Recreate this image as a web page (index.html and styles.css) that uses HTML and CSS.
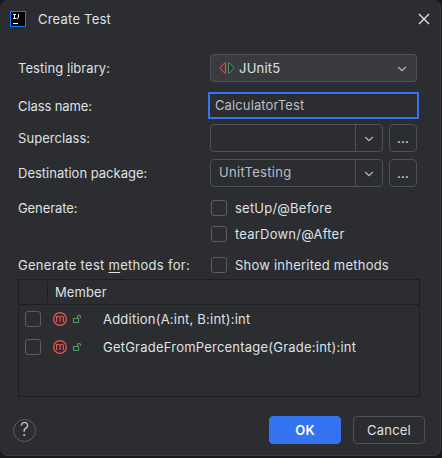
FILE: index.html
```
<!DOCTYPE html>
<html lang="en">
<head>
<meta charset="utf-8">
<title>Create Test</title>
<link rel="stylesheet" href="styles.css">
</head>
<body>
<svg width="0" height="0" class="defs">
  <symbol id="chevron" viewBox="0 0 10 6"><path d="M1.2 1 5 4.6 8.8 1" fill="none" stroke="#b4b8bf" stroke-width="1.2"/></symbol>
  <symbol id="method" viewBox="0 0 14 14"><circle cx="7" cy="7" r="6.4" fill="#402929" stroke="#db5c5c" stroke-width="1.2"/><path d="M3.5 10V4M3.5 6Q3.6 4.5 5.3 4.5T7 6V10M7 6Q7.1 4.5 8.8 4.5T10.5 6V10" fill="none" stroke="#db5c5c" stroke-width="1.1"/></symbol>
  <symbol id="unlocked" viewBox="0 0 8 8"><path d="M.5 3.5H5.5V7.5H.5ZM4.5 3.5V1.7Q4.5.5 6 .5T7.5 1.7V3" fill="none" stroke="#57965c" stroke-width="1.15"/></symbol>
</svg>
<main class="dialog">
  <header class="titlebar">
    <svg class="logo" width="16" height="16" viewBox="0 0 16 16"><rect x=".5" y=".5" width="15" height="15" fill="#000" stroke="#087cfa"/><path d="M3 3.5H6M4.5 3.5V7.5M3 7.5H6M8.5 3V6.7Q8.5 7.5 6.5 7.5" fill="none" stroke="#fff"/><path d="M3 12.5H8" stroke="#fff"/></svg>
    <h1>Create Test</h1>
    <svg class="close" width="12" height="12" viewBox="0 0 12 12"><path d="M1 1 11 11M11 1 1 11" stroke="#f0f1f2" stroke-width="1.1"/></svg>
  </header>
  <form class="form">
    <div class="row library">
      <label>Testing <u>l</u>ibrary:</label>
      <div class="select">
        <svg width="16" height="12" viewBox="0 0 16 12"><path d="M6.5 .8V11.2H5.7L1.4 6.6V5.4L5.7 .8Z" fill="#5a3033" stroke="#db5c5c"/><path d="M9.5 .8V11.2H10.3L14.6 6.6V5.4L10.3 .8Z" fill="#253627" stroke="#57965c"/></svg>
        <span>JUnit5</span>
        <svg class="arrow" width="10" height="6"><use href="#chevron"/></svg>
      </div>
    </div>
    <div class="row name">
      <label>Class name:</label>
      <div class="input focused">CalculatorTest</div>
    </div>
    <div class="row super">
      <label>Superclass:</label>
      <div class="combo"><span></span><i><svg width="10" height="6"><use href="#chevron"/></svg></i></div>
      <div class="browse">...</div>
    </div>
    <div class="row package">
      <label>Destination package:</label>
      <div class="combo"><span>UnitTesting</span><i><svg width="10" height="6"><use href="#chevron"/></svg></i></div>
      <div class="browse">...</div>
    </div>
    <div class="row check before"><label>Generate:</label><b class="box"></b><span>setUp/@Before</span></div>
    <div class="row check after"><label></label><b class="box"></b><span>tearDown/@After</span></div>
    <div class="row check inherited"><label>Generate test <u>m</u>ethods for:</label><b class="box"></b><span>Show inherited methods</span></div>
  </form>
  <section class="table">
    <div class="thead"><i></i><span>Member</span></div>
    <div class="member"><b class="box"></b><svg class="m" width="14" height="14"><use href="#method"/></svg><svg class="lock" width="8" height="8"><use href="#unlocked"/></svg><span>Addition(A:int, B:int):int</span></div>
    <div class="member"><b class="box"></b><svg class="m" width="14" height="14"><use href="#method"/></svg><svg class="lock" width="8" height="8"><use href="#unlocked"/></svg><span>GetGradeFromPercentage(Grade:int):int</span></div>
  </section>
  <footer class="footer">
    <div class="help">?</div>
    <div class="button primary">OK</div>
    <div class="button">Cancel</div>
  </footer>
</main>
</body>
</html>
```
FILE: styles.css
```
* { box-sizing: border-box; }
body {
  margin: 0;
  height: 458px;
  overflow: hidden;
  background: #19191b;
  color: #dfe1e5;
  font: 13px/16px Inter, "Liberation Sans", sans-serif;
  letter-spacing: 0.22px;
}
svg { display: block; flex: none; }
.defs { position: absolute; }
.dialog {
  width: 441px;
  height: 456px;
  background: #2b2d30;
  border: solid #3c3d40;
  border-width: 0 1px 1px 0;
  border-radius: 8px;
  overflow: hidden;
}
.titlebar {
  display: flex;
  align-items: center;
  height: 38px;
  padding: 0 10px;
}
h1 { margin: 0 auto 0 12px; font-size: 13px; font-weight: 400; }
.form { padding-left: 18px; }
.row { display: flex; align-items: center; height: 28px; }
.row label { width: 192px; flex: none; white-space: nowrap; letter-spacing: 0; }
.row.inherited label { letter-spacing: 0.28px; }
u { text-decoration: underline; text-underline-offset: 2px; text-decoration-skip-ink: none; }
.library { margin-top: 16px; }
.library label, .super label { padding-bottom: 1px; letter-spacing: 0.05px; }
.name { margin-top: 10px; height: 27px; }
.name label { letter-spacing: -0.1px; }
.super { margin-top: 5px; }
.package { margin-top: 7px; }
.package label { padding-bottom: 1px; }
.select {
  display: flex;
  align-items: center;
  width: 207px;
  height: 28px;
  padding: 0 9px 0 8px;
  border: 1px solid #4e5157;
  border-radius: 4px;
  background: #393b40;
}
.select span { margin-left: 4px; }
.arrow { margin: 2px 0 0 auto; }
.input {
  width: 211px;
  height: 27px;
  margin-left: -2px;
  padding: 3px 5px;
  border: 2px solid #3574f0;
  border-radius: 1px;
  color: #bcbec4;
  letter-spacing: 0.12px;
}
.combo {
  display: flex;
  width: 173px;
  height: 28px;
  border: 1px solid #4e5157;
  border-radius: 4px;
  color: #bcbec4;
}
.combo span { flex: 1; padding: 4px 8px; letter-spacing: 0.3px; }
.combo i {
  display: grid;
  place-items: center;
  width: 27px;
  padding-top: 2px;
  border-left: 1px solid #4e5157;
}
.browse {
  width: 28px;
  height: 28px;
  margin-left: 6px;
  padding-top: 5px;
  border: 1px solid #4e5157;
  border-radius: 4px;
  text-align: center;
}
.check { height: 16px; }
.box {
  flex: none;
  width: 16px;
  height: 16px;
  border: 1px solid #5a5d63;
  border-radius: 3px;
}
.check .box { margin: 0 8px 0 1px; }
.before { margin-top: 13px; }
.before label { letter-spacing: -0.1px; }
.after { margin-top: 10px; }
.inherited { margin-top: 15px; }
.table {
  width: 402px;
  height: 118px;
  margin: 6px 0 0 18px;
  border: 1px solid #1e1f22;
}
.thead {
  display: flex;
  align-items: center;
  height: 25px;
  border-bottom: 1px solid #1e1f22;
}
.thead i { width: 29px; height: 22px; border-right: 1px solid #1e1f22; }
.thead span { margin-left: 7px; letter-spacing: 0.1px; }
.member {
  display: flex;
  align-items: center;
  height: 28px;
  padding-left: 6px;
}
.m { margin-left: 12px; }
.lock { margin-left: 6px; }
.member span { margin-left: 22px; white-space: nowrap; }
.footer {
  display: flex;
  align-items: center;
  height: 28px;
  margin-top: 19px;
  padding: 0 15px 0 13px;
}
.help {
  width: 23px;
  height: 23px;
  margin: 1px auto 0 0;
  border: 1px solid #5a5d63;
  border-radius: 50%;
  font-size: 18px;
  font-weight: 300;
  line-height: 20px;
  text-align: center;
  color: #ced0d6;
}
.button {
  width: 72px;
  height: 28px;
  border: 1px solid #4e5157;
  border-radius: 4px;
  line-height: 26px;
  text-align: center;
}
.primary {
  margin-right: 12px;
  border-color: #3574f0;
  background: #3574f0;
  color: #fff;
  font-weight: 600;
}
```
